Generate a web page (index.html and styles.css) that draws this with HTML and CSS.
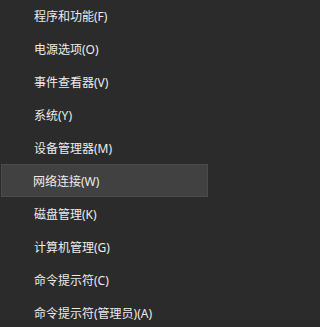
FILE: index.html
```html
<!DOCTYPE html>
<html lang="zh-CN">
<head>
<meta charset="utf-8">
<link rel="stylesheet" href="styles.css">
</head>
<body>
<ul class="menu">
  <li class="item">程序和功能(F)</li>
  <li class="item">电源选项(O)</li>
  <li class="item">事件查看器(V)</li>
  <li class="item">系统(Y)</li>
  <li class="item">设备管理器(M)</li>
  <li class="item hover">网络连接(W)</li>
  <li class="item">磁盘管理(K)</li>
  <li class="item">计算机管理(G)</li>
  <li class="item">命令提示符(C)</li>
  <li class="item">命令提示符(管理员)(A)</li>
</ul>
</body>
</html>
```
FILE: styles.css
```css
html, body {
  margin: 0;
  padding: 0;
  background: #2b2b2b;
  height: 327px;
  overflow: hidden;
}
.menu {
  list-style: none;
  margin: -1px 0 0 0;
  padding: 0;
  width: 208px;
  display: flex;
  flex-direction: column;
}
.item {
  box-sizing: border-box;
  height: 33px;
  display: flex;
  align-items: center;
  padding-left: 33px;
  font-family: "Noto Sans", "Noto Sans CJK SC", sans-serif;
  font-size: 12px;
  color: #ececec;
  white-space: nowrap;
  border: 1px solid transparent;
}
.hover {
  background: #414141;
  border-color: #4b4b4b;
  margin-left: 1px;
  padding-left: 31px;
}
```
